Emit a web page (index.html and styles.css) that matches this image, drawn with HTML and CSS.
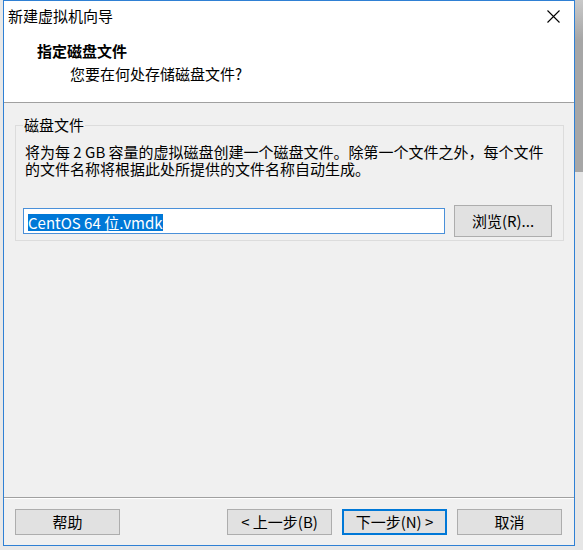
FILE: index.html
```html
<!DOCTYPE html>
<html lang="zh-CN">
<head>
    <meta charset="UTF-8">
    <title>新建虚拟机向导</title>
    <link rel="stylesheet" href="styles.css">
</head>
<body>
    <div class="screen">
        <div class="window">
            <div class="titlebar">
                <span class="title">新建虚拟机向导</span>
                <span class="close">
                    <svg width="13" height="13" viewBox="0 0 13 13">
                        <path d="M0.5 0.5 L12.5 12.5 M12.5 0.5 L0.5 12.5" stroke="#000" stroke-width="1.1" fill="none"/>
                    </svg>
                </span>
            </div>

            <div class="header">
                <h1>指定磁盘文件</h1>
                <p>您要在何处存储磁盘文件?</p>
            </div>

            <div class="content">
                <fieldset class="group">
                    <legend>磁盘文件</legend>
                    <p class="info">将为每 2 GB 容量的虚拟磁盘创建一个磁盘文件。除第一个文件之外，每个文件的文件名称将根据此处所提供的文件名称自动生成。</p>
                    <div class="file-row">
                        <div class="field"><span class="selected">CentOS 64 位.vmdk</span></div>
                        <button class="btn browse">浏览(R)...</button>
                    </div>
                </fieldset>
            </div>

            <div class="footer">
                <button class="btn">帮助</button>
                <div class="nav">
                    <button class="btn">&lt; 上一步(B)</button>
                    <button class="btn default">下一步(N) &gt;</button>
                    <button class="btn">取消</button>
                </div>
            </div>
        </div>
        <div class="desktop"></div>
    </div>
</body>
</html>
```

FILE: styles.css
```css
body {
    margin: 0;
    background-color: #e8e8e8;
    font-family: "Noto Sans CJK SC", "Microsoft YaHei", sans-serif;
    font-size: 15px;
    color: #000;
}
.screen {
    display: flex;
    height: 550px;
    padding-left: 3px;
    box-sizing: border-box;
}
.window {
    width: 572px;
    height: 546px;
    border: 1px solid #2f80d4;
    box-sizing: border-box;
    background-color: #f0f0f0;
    display: flex;
    flex-direction: column;
}
.desktop {
    flex: 1;
    background: linear-gradient(#c9c9c9 0, #a6a6a6 40px, #a6a6a6 172px, #e6e6e6 172px);
}
.titlebar {
    height: 29px;
    background-color: #fff;
    display: flex;
    align-items: center;
    justify-content: space-between;
    padding-left: 4px;
}
.title {
    line-height: 20px;
    padding-top: 1px;
}
.close {
    width: 42px;
    display: flex;
    justify-content: center;
    padding-top: 2px;
}
.header {
    height: 73px;
    background-color: #fff;
    border-bottom: 1px solid #a0a0a0;
    padding: 11px 0 0 33px;
    box-sizing: border-box;
}
.header h1 {
    margin: 0;
    font-size: 15px;
    font-weight: bold;
    line-height: 20px;
}
.header p {
    margin: 3px 0 0 33px;
    line-height: 20px;
}
.content {
    flex: 1;
    padding: 13px 10px 0 11px;
}
.group {
    margin: 0;
    border: 1px solid #dcdcdc;
    padding: 0 8px 3px 7px;
}
.group legend {
    padding: 0 1px;
    margin-left: 0;
    line-height: 18px;
}
.info {
    margin: 9px 0 0 2px;
    line-height: 17px;
}
.file-row {
    display: flex;
    align-items: center;
    gap: 9px;
    margin-top: 28px;
}
.field {
    width: 422px;
    height: 26px;
    border: 1px solid #4a90d9;
    background-color: #fff;
    box-sizing: border-box;
    padding: 3px 0 0 4px;
}
.selected {
    display: inline-block;
    background-color: #0078d7;
    color: #fff;
    line-height: 17px;
}
.btn {
    font-family: inherit;
    font-size: 15px;
    color: #000;
    background-color: #e1e1e1;
    border: 1px solid #adadad;
    width: 105px;
    height: 26px;
    padding: 0;
    line-height: 20px;
}
.browse {
    width: 98px;
    height: 32px;
}
.btn.default {
    border: 2px solid #0078d7;
}
.footer {
    border-top: 1px solid #a0a0a0;
    box-shadow: inset 0 1px 0 #fff;
    display: flex;
    justify-content: space-between;
    padding: 11px 12px 10px 11px;
}
.nav {
    display: flex;
    gap: 10px;
}
```
